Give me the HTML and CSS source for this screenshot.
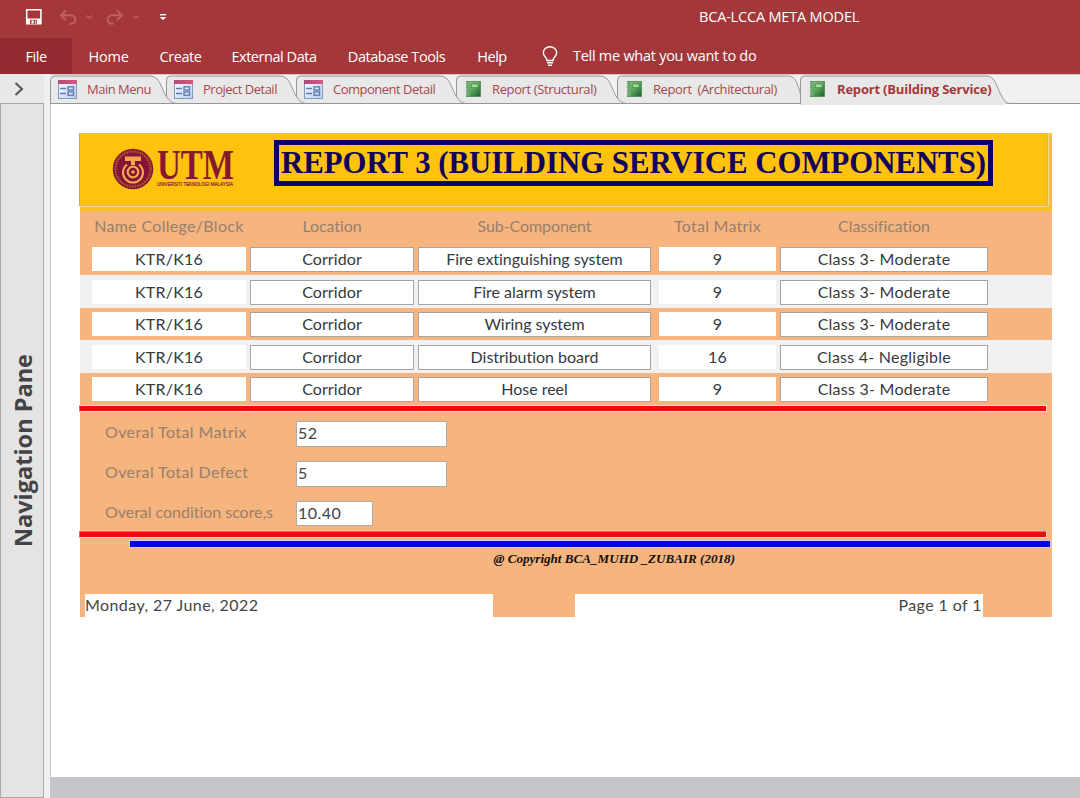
FILE: index.html
```html
<!DOCTYPE html>
<html lang="en">
<head>
<meta charset="utf-8">
<title>BCA-LCCA META MODEL</title>
<link rel="stylesheet" href="styles.css">
</head>
<body>
<svg width="0" height="0" class="defs">
  <defs>
    <linearGradient id="pink" x1="0" x2="1"><stop offset="0" stop-color="#b04a78"/><stop offset="1" stop-color="#d9577f"/></linearGradient>
    <linearGradient id="sheet" x1="0" y1="0" x2="1" y2="1"><stop offset="0" stop-color="#fff"/><stop offset="1" stop-color="#b9cdea"/></linearGradient>
    <linearGradient id="green" x1="0" y1="0" x2="1" y2="1"><stop offset="0" stop-color="#8cc98a"/><stop offset=".5" stop-color="#55a55a"/><stop offset="1" stop-color="#1f5c31"/></linearGradient>
    <symbol id="form" viewBox="0 0 19 19">
      <rect x=".5" y=".5" width="18" height="18" fill="url(#sheet)" stroke="#8399bd"/>
      <rect x="0" y="0" width="19" height="4" fill="url(#pink)"/>
      <path d="M2 8.500h6M2 13.500h6" stroke="#5f7db2" stroke-width="1.500"/>
      <rect x="10" y="6.800" width="5.500" height="3.200" fill="#dce8fa" stroke="#5f7db2" stroke-width="1.400"/>
      <rect x="10" y="12" width="5.500" height="3.200" fill="#dce8fa" stroke="#5f7db2" stroke-width="1.400"/>
    </symbol>
    <symbol id="book" viewBox="0 0 16 16">
      <rect x="1.500" y=".5" width="14" height="15" fill="url(#green)" stroke="#4b8556" stroke-width=".8"/>
      <rect x="2" y="1" width="2.500" height="14" fill="#68a96c"/>
      <rect x="6.500" y="3" width="6.500" height="3.500" fill="#a5dc9a" stroke="#478a4b" stroke-width=".7"/>
      <path d="M1.200 1v14" stroke="#c3d8c5" stroke-width="1.500" stroke-dasharray="1 1"/>
    </symbol>
  </defs>
</svg>
<div class="app">
  <header class="titlebar">
    <svg class="quick" width="180" height="36" viewBox="0 0 180 36" fill="none">
      <path d="M26.700 9.700h14.200v14H26.700z" stroke="#fff" stroke-width="1.500"/>
      <path d="M27 18.500h14V24H27z" fill="#fff"/>
      <path d="M30 19.800h7v4h-7z" fill="#a4373a"/><path d="M31.500 20.500h2.200v3h-2.200zM35.300 20.500h1v3h-1z" fill="#fff"/>
      <g stroke="#c05f62" stroke-width="2">
        <path d="M66 10.500l-5 4.700 5 4.700M61.500 15.200H71a4.300 4.300 0 0 1 0 8.600h-1.500"/>
        <path d="M117 10.500l5 4.700-5 4.700M121.500 15.200H112a4.300 4.300 0 0 0 0 8.600h1.500"/>
        <path d="M86.500 15.500l2.800 2.300 2.800-2.300M133 15.500l2.800 2.300 2.800-2.300" stroke-width="1.300"/>
      </g>
      <path d="M160 14.700h6" stroke="#fff" stroke-width="1.400"/><path d="M159.800 17h6.400L163 20.300z" fill="#fff"/>
    </svg>
    <span class="apptitle">BCA-LCCA META MODEL</span>
  </header>
  <nav class="menu">
    <span class="m file">File</span><span class="m home">Home</span><span class="m create">Create</span><span class="m ext">External Data</span><span class="m db">Database Tools</span><span class="m help">Help</span>
    <svg class="bulb" width="16" height="22" viewBox="0 0 16 22" fill="none" stroke="#fff" stroke-width="1.400"><path d="M5 14.500c0-3-3.700-4.300-3.700-7.700a6.700 6 0 0 1 13.400 0C14.700 10.200 11 11.500 11 14.500zM5 16.800h6M6 19.200h4"/></svg>
    <span class="tell">Tell me what you want to do</span>
  </nav>
  <div class="work">
    <aside class="side">
      <div class="expand"><svg width="10" height="14" viewBox="0 0 10 14" fill="none" stroke="#555" stroke-width="2"><path d="M1.500 1L8 7l-6.500 6"/></svg></div>
      <div class="pane"><span>Navigation Pane</span></div>
    </aside>
    <main class="main">
      <div class="tabs">
        <svg class="tabshapes" width="1030" height="30" viewBox="0 0 1030 30" fill="#e9e8e8" stroke="#96969a">
          <path d="M0 28.500H1030" />
          <path d="M567.500 28.500V5q0-4 4-4H738c8 0 10 9 12.500 18V28.500z"/>
          <path d="M406.500 28.500V5q0-4 4-4H550c10 0 11 12 16 20q5 8 11 7.500z"/>
          <path d="M246.500 28.500V5q0-4 4-4H390c10 0 11 12 16 20q5 8 11 7.500z"/>
          <path d="M116.500 28.500V5q0-4 4-4H230c10 0 11 12 16 20q5 8 11 7.500z"/>
          <path d="M.5 28.500V5q0-4 4-4H100c10 0 11 12 16 20q5 8 11 7.500z"/>
          <path d="M750.500 29.500V5q0-4 4-4H936c9 0 10 9 15 19q4 9 10 8.500" />
          <path d="M751 29h204" stroke="#e9e8e8" stroke-width="2"/>
        </svg>
        <div class="tab t1"><svg class="ic"><use href="#form"/></svg><span>Main Menu</span></div>
        <div class="tab t2"><svg class="ic"><use href="#form"/></svg><span>Project Detail</span></div>
        <div class="tab t3"><svg class="ic"><use href="#form"/></svg><span>Component Detail</span></div>
        <div class="tab t4"><svg class="ib"><use href="#book"/></svg><span>Report (Structural)</span></div>
        <div class="tab t5"><svg class="ib"><use href="#book"/></svg><span>Report&nbsp; (Architectural)</span></div>
        <div class="tab t6"><svg class="ib"><use href="#book"/></svg><span>Report (Building Service)</span></div>
      </div>
      <div class="canvas">
        <section class="report">
          <div class="head">
            <div class="headbox">
              <svg class="logo" width="124" height="44" viewBox="0 0 124 44">
                <circle cx="21" cy="22" r="20.300" fill="#851a35"/>
                <circle cx="21" cy="22" r="17.600" fill="none" stroke="#b8602f" stroke-width="2" stroke-dasharray="1.500 1.200"/>
                <circle cx="21" cy="22" r="15" fill="#851338"/>
                <path d="M13 9.500h16v4.500H13z" fill="#f3a84e"/><path d="M19 14h4v4h-4z" fill="#f3a84e"/>
                <path d="M15 17.500a10 10 0 1 0 12 0" fill="none" stroke="#f3a84e" stroke-width="2"/>
                <circle cx="21" cy="25" r="5.300" fill="none" stroke="#f3a84e" stroke-width="2.200"/>
                <circle cx="21" cy="25" r="1.800" fill="#f3a84e"/>
                <text x="45" y="32" class="utm" textLength="77" lengthAdjust="spacingAndGlyphs">UTM</text>
                <text x="45" y="39" class="uni" textLength="76" lengthAdjust="spacingAndGlyphs">UNIVERSITI TEKNOLOGI MALAYSIA</text>
              </svg>
              <div class="titlebox"><svg width="709" height="36" viewBox="0 0 709 36"><text x="2" y="28" class="rt" textLength="705" lengthAdjust="spacingAndGlyphs">REPORT 3 (BUILDING SERVICE COMPONENTS)</text></svg></div>
            </div>
          </div>
          <div class="row labels"><span>Name College/Block</span><span>Location</span><span>Sub-Component</span><span>Total Matrix</span><span>Classification</span></div>
          <div class="row"><span>KTR/K16</span><span class="b">Corridor</span><span class="b">Fire extinguishing system</span><span>9</span><span class="b">Class 3- Moderate</span></div>
          <div class="row alt"><span>KTR/K16</span><span class="b">Corridor</span><span class="b">Fire alarm system</span><span>9</span><span class="b">Class 3- Moderate</span></div>
          <div class="row"><span>KTR/K16</span><span class="b">Corridor</span><span class="b">Wiring system</span><span>9</span><span class="b">Class 3- Moderate</span></div>
          <div class="row alt"><span>KTR/K16</span><span class="b">Corridor</span><span class="b">Distribution board</span><span>16</span><span class="b">Class 4- Negligible</span></div>
          <div class="row"><span>KTR/K16</span><span class="b">Corridor</span><span class="b">Hose reel</span><span>9</span><span class="b">Class 3- Moderate</span></div>
          <div class="red"></div>
          <div class="totals">
            <div class="tot"><label>Overal Total Matrix</label><output>52</output></div>
            <div class="tot"><label>Overal Total Defect</label><output>5</output></div>
            <div class="tot"><label class="score">Overal condition score,s</label><output class="short">10.40</output></div>
          </div>
          <div class="red second"></div>
          <div class="blue"></div>
          <div class="copy"><span>@ Copyright BCA_MUHD _ZUBAIR (2018)</span></div>
          <footer class="foot"><span class="date">Monday, 27 June, 2022</span><span class="page">Page 1 of 1</span></footer>
        </section>
      </div>
      <div class="bottom"></div>
    </main>
  </div>
</div>
</body>
</html>
```
FILE: styles.css
```css
* { box-sizing: border-box; }
body { margin: 0; font-family: "Open Sans", "Noto Sans", sans-serif; background: #fff; }
.defs { position: absolute; }
.app { width: 1080px; height: 798px; display: flex; flex-direction: column; overflow: hidden; }
.titlebar { height: 38px; background: #a4373a; display: flex; color: #fff; flex: none; }
.quick { width: 180px; height: 36px; }
.apptitle { margin-left: 519px; font-size: 14.5px; line-height: 33px; letter-spacing: -.18px; white-space: nowrap; }
.menu { height: 36px; flex: none; display: flex; background: #a4373a; color: #fff; font-size: 14.5px; line-height: 37px; }
.m { text-align: center; white-space: nowrap; letter-spacing: -.45px; }
.file { width: 72px; background: #922b2f; }
.home { width: 73px; letter-spacing: -.2px; }
.create { width: 71px; }
.ext { width: 116px; }
.db { width: 129px; }
.help { width: 62px; }
.bulb { margin: 8px 0 0 19px; }
.tell { margin-left: 15px; line-height: 36px; letter-spacing: -.27px; white-space: nowrap; }
.work { flex: 1; display: flex; min-height: 0; }
.side { width: 50px; display: flex; flex-direction: column; background: #eef0f2; }
.expand { height: 29px; width: 44px; background: #e8e8e8; padding: 8px 0 0 14px; line-height: 0; }
.pane { flex: 1; width: 44px; background: #e4e4e4; border: 1px solid #a9a9ab; display: flex; align-items: center; justify-content: flex-start; padding-left: 7px; }
.pane span { writing-mode: vertical-rl; transform: rotate(180deg); font-weight: 700; font-size: 23.5px; line-height: 30px; color: #444; white-space: nowrap; }
.main { flex: 1; display: flex; flex-direction: column; min-width: 0; }
.tabs { height: 29px; flex: none; display: flex; position: relative; background: #f3f1f0; border-top: 1px solid #ccc; }
.tabshapes { position: absolute; left: 0; top: 0; }
.tab { position: relative; display: flex; align-items: center; font-size: 13px; color: #a5484b; letter-spacing: -.5px; white-space: nowrap; height: 28px; }
.tab svg { flex: none; }
.ic { width: 19px; height: 19px; }
.ib { width: 16px; height: 16px; }
.t1 { width: 116px; padding-left: 8px; gap: 10px; }
.t2 { width: 130px; padding-left: 8px; gap: 10px; }
.t3 { width: 160px; padding-left: 8px; gap: 10px; }
.t4 { width: 161px; padding-left: 9px; gap: 11px; letter-spacing: -.38px; }
.t5 { width: 184px; padding-left: 9px; gap: 11px; letter-spacing: -.4px; }
.t6 { padding-left: 8px; gap: 12px; font-weight: 700; color: #a4373a; letter-spacing: -.2px; }
.canvas { flex: 1; background: #fff; border-left: 1px solid #c0c4c9; padding: 30px 0 0 29px; }
.bottom { height: 21px; background: #c4c6cb; }
.report { width: 972px; height: 484px; background: #f6b47f; font-family: Lato, sans-serif; font-size: 16px; font-variant-ligatures: none; letter-spacing: .25px; color: #333a40; display: flex; flex-direction: column; }
.head { height: 77.5px; background: #fbc022; padding-right: 4px; flex: none; }
.headbox { height: 73px; background: #ffc20e; border: 1px solid #c9b878; border-left: 0; border-top-color: #e8bd45; box-shadow: 0 1px #f5dc8c, 1px 0 #f5dc8c, -1px 0 #b9a98b; display: flex; }
.logo { margin: 13px 0 0 32px; overflow: visible; }
.utm { font: bold 42px "Liberation Serif", serif; fill: #851a2d; letter-spacing: 0; }
.uni { font: 6px "Liberation Sans", sans-serif; fill: #851a2d; stroke: #851a2d; stroke-width: .2px; letter-spacing: 0; }
.titlebox { margin: 6px 0 0 38px; width: 719px; height: 46px; border: 5px solid #0b0070; line-height: 0; }
.titlebox svg { overflow: visible; }
.rt { font: bold 31px "Liberation Serif", serif; fill: #12005c; letter-spacing: 0; }
.row { height: 32.5px; flex: none; display: grid; grid-template-columns: 154px 164px 233px 117px 208px; column-gap: 4px; padding: 4.5px 0 0 12px; text-align: center; line-height: 23px; white-space: nowrap; }
.row span { height: 24px; background: #fff; }
.row span:nth-child(2) { letter-spacing: .1px; }
.row span:nth-child(3) { letter-spacing: -.02px; }
.row span:nth-child(4) { margin-left: 4px; margin-right: -4px; }
.row span:nth-child(5) { margin-left: 4px; margin-right: -4px; }
.row .b { height: 25px; border: 1px solid #a9a39e; line-height: 22px; }
.alt { background: #f1f1f1; }
.row.labels { height: 32px; color: #98806c; padding-top: 3.5px; line-height: 23px; }
.row.labels span { background: none; }
.row.labels span:nth-child(1) { letter-spacing: .3px; }
.row.labels span:nth-child(2) { letter-spacing: -.1px; }
.row.labels span:nth-child(3) { letter-spacing: -.08px; }
.row.labels span:nth-child(5) { letter-spacing: -.05px; }
.red { flex: none; width: 968px; height: 7px; margin-left: -1px; background: #ec0b0b; border: 1px solid #f9d9c8; border-left: 1px solid #a08080; }
.totals { flex: none; padding: 9px 0 0 25px; height: 118.5px; }
.tot { display: flex; height: 39.8px; color: #98806c; }
.tot label { width: 191px; line-height: 22px; white-space: nowrap; letter-spacing: .4px; }
.tot label.score { letter-spacing: -.03px; }
.tot output { width: 151px; height: 26px; background: #fff; border: 1px solid #b5a99f; padding-left: 1px; color: #444; line-height: 22px; letter-spacing: .5px; }
.tot output.short { width: 77px; height: 25px; }
.second { border-top-color: #b08078; }
.blue { flex: none; width: 922px; height: 8px; margin: 2px 0 0 49px; background: #0303e6; border: 1px solid #d8c8e8; }
.copy { flex: none; height: 46.5px; padding-left: 413.5px; font: italic bold 13.1px/21px "Liberation Serif", serif; letter-spacing: 0; color: #111; white-space: nowrap; }
.foot { height: 23px; flex: none; display: flex; gap: 82px; padding: 0 69px 0 5px; line-height: 21px; color: #444; letter-spacing: .42px; }
.foot span { background: #fff; }
.date { width: 408px; }
.page { flex: 1; text-align: right; padding-right: 1px; }
```
